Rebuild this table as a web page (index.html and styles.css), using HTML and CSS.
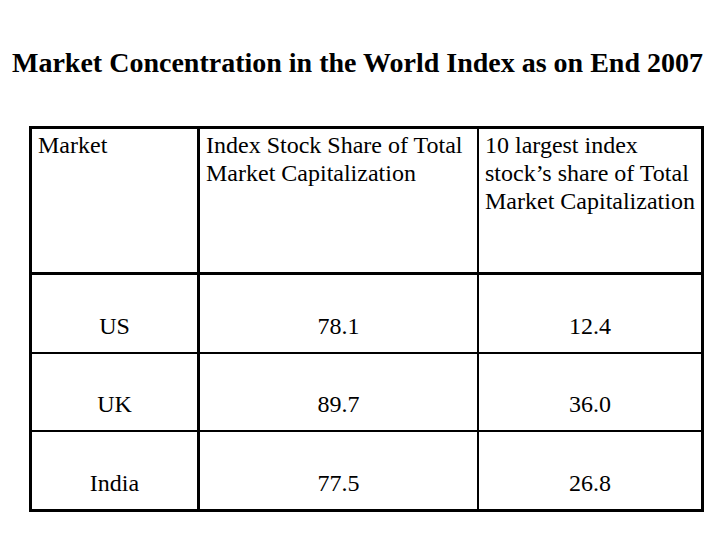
FILE: index.html
```html
<!DOCTYPE html>
<html lang="en">
<head>
<meta charset="utf-8">
<title>Market Concentration in the World Index</title>
<link rel="stylesheet" href="styles.css">
</head>
<body>
<h1 class="title">Market Concentration in the World Index as on End 2007</h1>
<table class="data">
  <tr class="head">
    <td class="c1">Market</td>
    <td class="c2">Index Stock Share of Total Market Capitalization</td>
    <td class="c3">10 largest index stock’s share of Total Market Capitalization</td>
  </tr>
  <tr class="row r1">
    <td class="c1">US</td>
    <td class="c2">78.1</td>
    <td class="c3">12.4</td>
  </tr>
  <tr class="row r2">
    <td class="c1">UK</td>
    <td class="c2">89.7</td>
    <td class="c3">36.0</td>
  </tr>
  <tr class="row r3">
    <td class="c1">India</td>
    <td class="c2">77.5</td>
    <td class="c3">26.8</td>
  </tr>
</table>
</body>
</html>
```
FILE: styles.css
```css
html, body {
  margin: 0;
  background: #fff;
  color: #000;
  font-family: "Liberation Serif", "Times New Roman", serif;
}

.title {
  margin: 0;
  padding: 47px 5px 0 0;
  font-family: "Liberation Serif", "Times New Roman", serif;
  font-size: 28px;
  line-height: 32px;
  font-weight: bold;
  text-align: center;
}

.data {
  margin: 47px 0 0 29px;
  border: 3px solid #000;
  border-spacing: 0;
  table-layout: fixed;
  width: 675px;
  font-family: "Liberation Serif", "Times New Roman", serif;
  font-size: 24px;
  line-height: 28px;
}

.data td {
  box-sizing: border-box;
  padding: 0;
  font-family: "Liberation Serif", "Times New Roman", serif;
  font-size: 24px;
  line-height: 28px;
  color: #000;
}

.data .c1 {
  width: 168px;
  border-right: 3px solid #000;
}

.data .c2 {
  width: 279px;
  border-right: 2px solid #000;
}

.data .c3 {
  width: 222px;
}

.head td {
  height: 146px;
  vertical-align: top;
  text-align: left;
  padding: 2px 4px 0 6px;
  border-bottom: 3px solid #000;
}

.row td {
  vertical-align: bottom;
  text-align: center;
  padding-bottom: 12px;
}

.r1 td {
  height: 79px;
  border-bottom: 2px solid #000;
}

.r2 td {
  height: 78px;
  border-bottom: 2px solid #000;
}

.r3 td {
  height: 77px;
}
```
